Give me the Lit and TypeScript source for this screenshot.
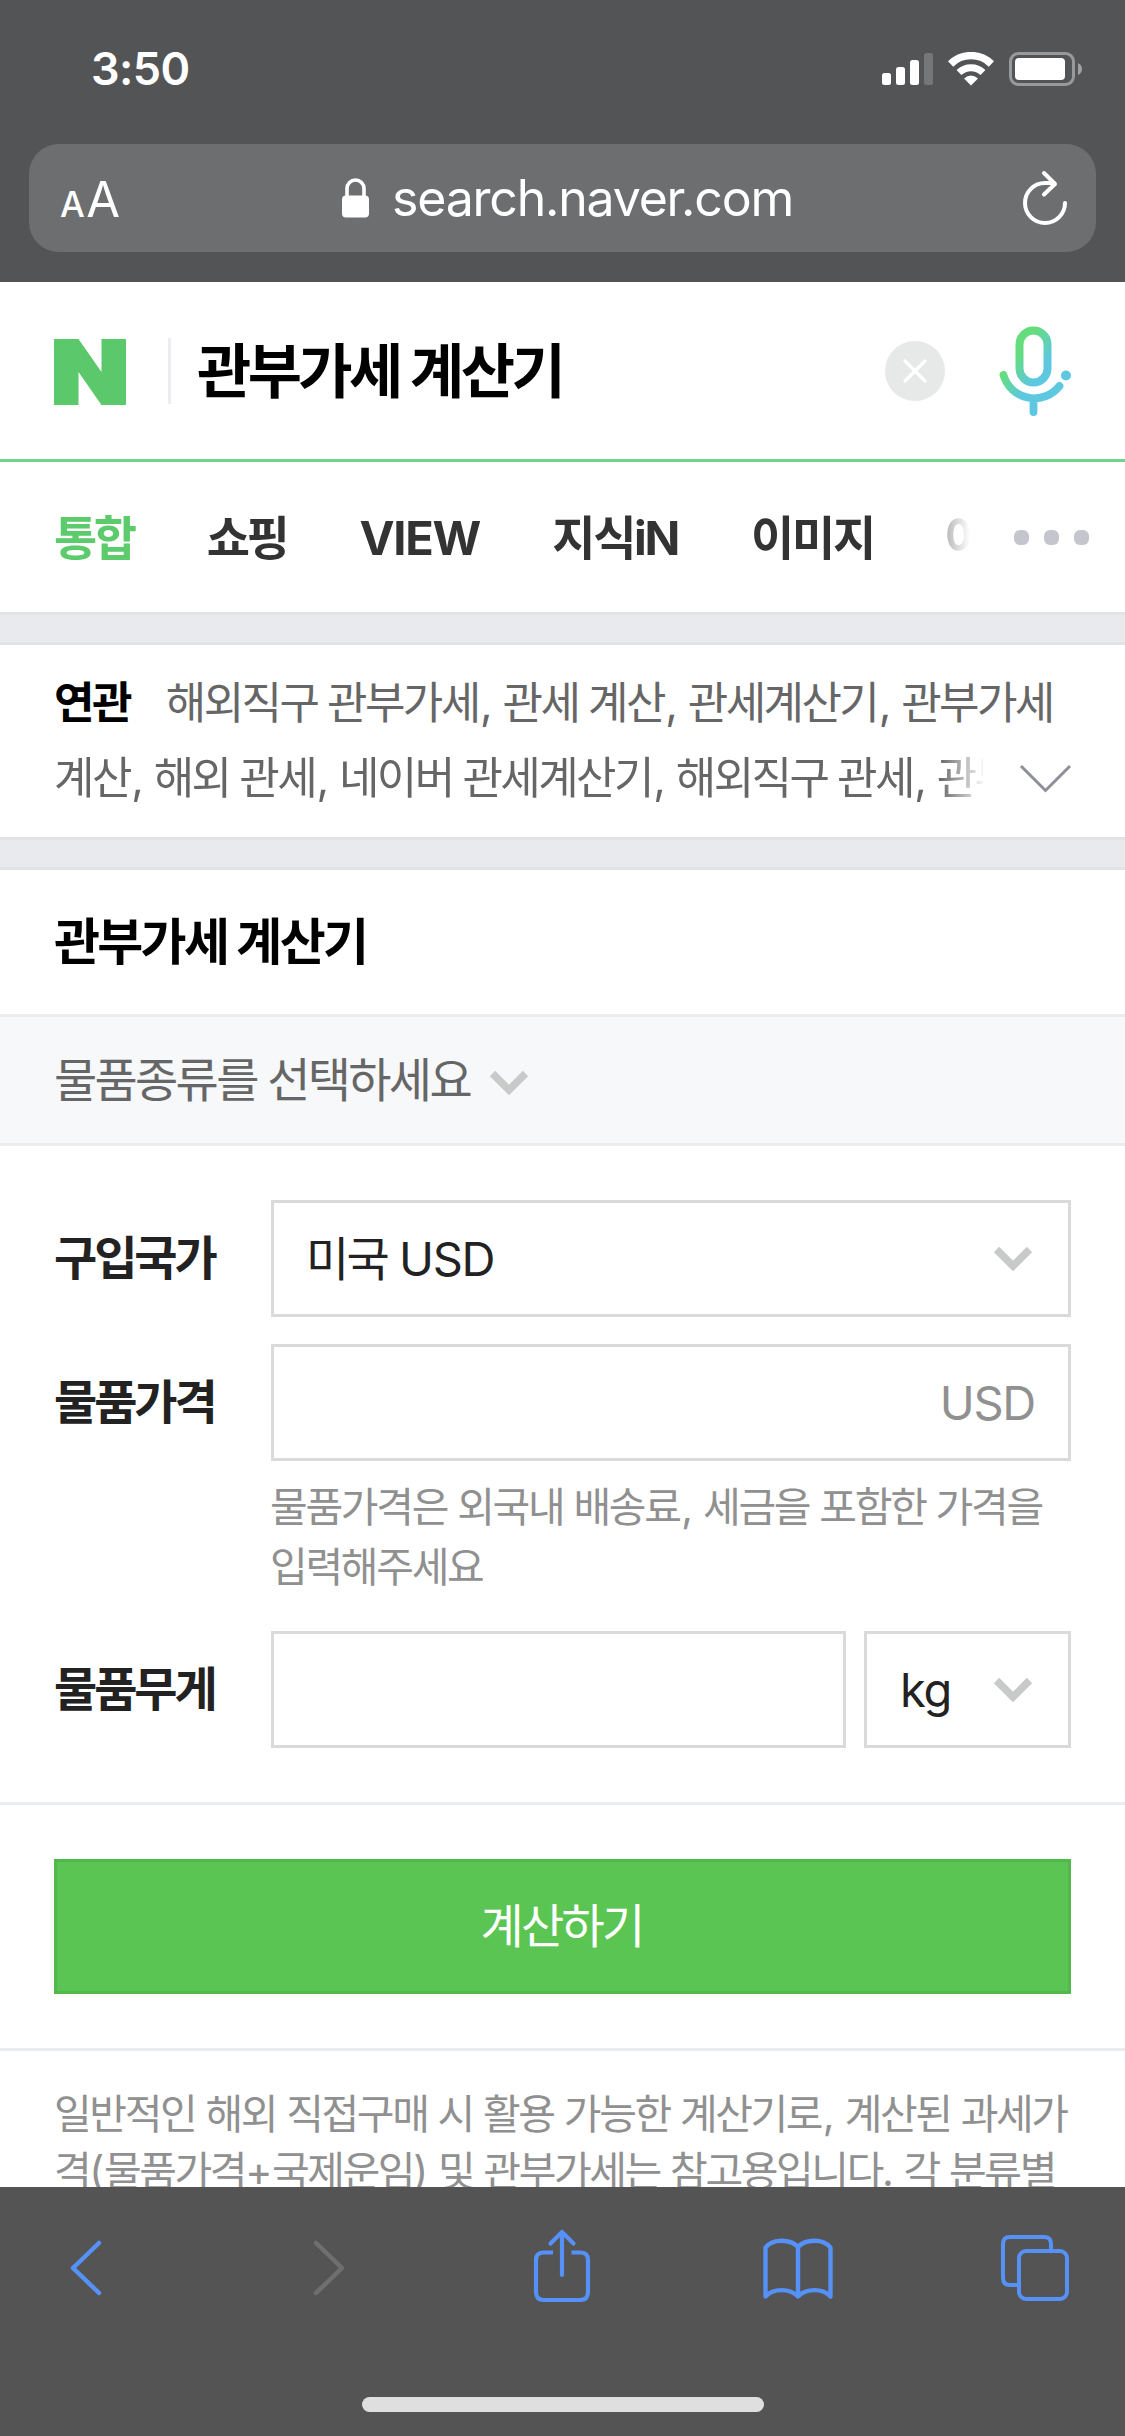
import { LitElement, html, css, svg } from "lit";
import { customElement } from "lit/decorators.js";

const chevron = html`<svg class="chev" width="40" height="26" viewBox="0 0 40 26">
  <path d="M3.5 3.5 L20 20 L36.5 3.5" fill="none" stroke="#c8cac9" stroke-width="7.5" />
</svg>`;

const bars = [[0, 20, 12], [14, 14, 18], [28, 7, 25]].map(
  ([x, y, h]) => svg`<rect x=${x} y=${y + 1} width="9" height=${h} rx="2.5" fill="#fff" />`
);

const spaced = (text: string) =>
  text.split(/([,()+.])/).map((part) => (/^[,()+.]$/.test(part)
    ? html`<span class=${part === "," ? "comma" : "punct"}>${part}</span>`
    : part));

@customElement("app-root")
export class AppRoot extends LitElement {
  static styles = css`
    :host { display: block; }
    * { box-sizing: border-box; }
    svg { display: block; flex: none; }
    .page {
      width: 1125px; height: 2436px; overflow: hidden; background: #fff;
      display: flex; flex-direction: column;
      font-family: Inter, "Noto Sans CJK KR", sans-serif;
      white-space: nowrap;
    }
    .comma { letter-spacing: -1px; margin: 0 1px 0 1.5px; }
    .punct { letter-spacing: -0.4px; }
    .top { height: 282px; flex: none; background: #535456; color: #fff; }
    .status { height: 144px; padding: 0 43px 6px 91px; display: flex; align-items: center; }
    .time { flex: 1; font-size: 45px; font-weight: 600; line-height: 60px; letter-spacing: -0.6px; }
    .sig { margin-right: 15px; }
    .wifi { margin-right: 15px; }
    .address {
      height: 108px; margin: 0 29px; padding: 0 28px 0 31px; border-radius: 30px;
      background: #6d6e70; display: flex; align-items: center;
    }
    .aa { width: 282px; padding-top: 7px; display: flex; align-items: baseline; gap: 3px; line-height: 60px; }
    .aa-s { font-size: 35px; font-weight: 500; letter-spacing: -1.5px; }
    .aa-l { font-size: 49px; letter-spacing: -1px; }
    .domain { flex: 1; margin-left: 23px; font-size: 50px; line-height: 60px; letter-spacing: -1.2px; }

    .search { height: 180px; flex: none; border-bottom: 3px solid #6fd58e; padding: 0 53px 0 54px; display: flex; align-items: center; }
    .logo { margin-top: 3px; }
    .divider { width: 3px; height: 66px; margin: 0 26px 0 42px; background: #ecedf2; }
    .query { flex: 1; margin-top: 2px; font-size: 59px; font-weight: 700; color: #000; letter-spacing: -3.6px; line-height: 80px; }
    .clear { margin-right: 54px; }

    .tabs { height: 150px; flex: none; padding: 0 36px 0 54px; display: flex; align-items: center; justify-content: space-between; }
    .tablist {
      width: 916px; overflow: hidden; display: flex; gap: 73px;
      -webkit-mask-image: linear-gradient(90deg, #000 850px, rgba(0, 0, 0, 0.35) 892px, transparent 916px);
      mask-image: linear-gradient(90deg, #000 850px, rgba(0, 0, 0, 0.35) 892px, transparent 916px);
    }
    .tab { flex: none; font-size: 47px; font-weight: 700; color: #333; letter-spacing: -3.4px; line-height: 75px; }
    .tab.on { color: #5ccb6c; }
    .tab.latin { letter-spacing: -1.2px; margin-right: -1px; }
    .tab.wide { letter-spacing: -2.3px; }
    .tab.last { margin-left: -2px; }

    .gap { height: 33px; flex: none; background: #e8eaee; border: solid #e1e3e6; border-width: 3px 0; }

    .related { height: 192px; flex: none; padding: 21px 53px 0 54px; font-size: 44px; line-height: 75px; color: #666; letter-spacing: -2.6px; }
    .rel-title { font-weight: 700; color: #000; margin-right: 36px; }
    .rel-row { display: flex; justify-content: space-between; align-items: center; }
    .rel-text {
      width: 929px; overflow: hidden;
      -webkit-mask-image: linear-gradient(90deg, #000 885px, transparent 932px);
      mask-image: linear-gradient(90deg, #000 885px, transparent 932px);
    }

    .title { height: 147px; flex: none; padding-left: 54px; border-bottom: 3px solid #ebecee; font-size: 50px; line-height: 144px; font-weight: 700; color: #000; letter-spacing: -2.7px; }
    .kind { height: 129px; flex: none; padding-left: 54px; border-bottom: 3px solid #ebecee; background: #f7f8fa; display: flex; align-items: center; font-size: 47px; line-height: 70px; color: #666; letter-spacing: -2.7px; gap: 19px; }
    .kind .chev { margin-top: 5px; }

    .form { height: 659px; flex: none; padding: 54px 54px 0; border-bottom: 3px solid #eaedf0; display: flex; flex-direction: column; }
    .row { display: flex; align-items: center; height: 117px; }
    .label { width: 217px; padding-bottom: 2px; font-size: 47px; font-weight: 700; color: #222; letter-spacing: -3.1px; line-height: 70px; }
    .box { height: 117px; border: 3px solid #d9dada; padding: 0 35px 0 32px; flex: 1; display: flex; align-items: center; justify-content: space-between; font-size: 47px; line-height: 70px; color: #222; letter-spacing: -1.3px; }
    .ko { letter-spacing: -2.7px; }
    .box.unit { color: #909090; justify-content: flex-end; padding-right: 33px; }
    .box.kg { flex: none; width: 207px; margin-left: 18px; padding-left: 33px; }
    .second { margin-top: 27px; }
    .help { margin: 16px 0 34px 216px; height: 120px; font-size: 41px; line-height: 60px; color: #909090; letter-spacing: -2.3px; word-spacing: 0.8px; }

    .action { height: 246px; flex: none; padding: 54px 54px 0; border-bottom: 3px solid #eaedf0; }
    .btn { height: 135px; padding-right: 2px; border: 3px solid #53b84c; background: #5ac553; color: #fff; font-size: 47px; line-height: 127px; text-align: center; letter-spacing: -2.7px; }
    .note { height: 136px; flex: none; overflow: hidden; padding: 35px 0 0 54px; font-size: 41px; line-height: 57px; color: #909090; letter-spacing: -2.4px; word-spacing: 1px; }

    .bottom { height: 249px; flex: none; background: #545454; display: flex; flex-direction: column; align-items: center; justify-content: space-between; padding: 41px 0 24px; }
    .tools { width: 1125px; height: 80px; padding-left: 68px; display: flex; align-items: center; }
    .fwd { margin-left: 211px; }
    .share { margin: -4px 0 0 186px; }
    .book { margin-left: 171px; }
    .windows { margin-left: 166px; }
    .home { width: 402px; height: 15px; border-radius: 8px; background: #dfdfdf; }
  `;

  render() {
    return html`<div class="page">
      <div class="top">
        <div class="status">
          <span class="time">3:50</span>
          <svg class="sig" width="51" height="34" viewBox="0 0 51 34">${bars}
            <rect x="42" y="1" width="9" height="32" rx="2.5" fill="#757678" /></svg>
          <svg class="wifi" width="46" height="34" viewBox="0 0 46 34" fill="none" stroke="#fff">
            <path d="M2.6 12 A29 29 0 0 1 43.4 12" stroke-width="7.5" />
            <path d="M11 20.5 A17.5 17.5 0 0 1 35 20.5" stroke-width="7" />
            <path d="M16 26.5 Q23 20.5 30 26.5 L23 33.5 Z" fill="#fff" stroke="none" />
          </svg>
          <svg width="73" height="34" viewBox="0 0 73 34">
            <rect x="1.5" y="1.5" width="63" height="31" rx="8" fill="none" stroke="#98999a" stroke-width="3" />
            <rect x="6" y="6" width="50" height="22" rx="4" fill="#fff" />
            <path d="M69 11 Q73 13 73 17 Q73 21 69 23 Z" fill="#a0a1a2" />
          </svg>
        </div>
        <div class="address">
          <div class="aa"><span class="aa-s">A</span><span class="aa-l">A</span></div>
          <svg width="27" height="40" viewBox="0 0 27 40">
            <path d="M5 19 V10.5 A8.5 8.5 0 0 1 22 10.5 V19" fill="none" stroke="#fff" stroke-width="3.6" />
            <rect y="17.5" width="27" height="22" rx="4" fill="#fff" />
          </svg>
          <span class="domain">search.naver.com</span>
          <svg width="46" height="56" viewBox="0 0 46 56" fill="none" stroke="#fff" stroke-width="4" stroke-linecap="round" stroke-linejoin="round">
            <path d="M43 33 A20 20 0 1 1 23 13 H32" /><path d="M22 3 L33 14 L22 24.5" />
          </svg>
        </div>
      </div>

      <div class="search">
        <svg class="logo" width="72" height="66" viewBox="0 0 72 66"><path fill="#5bc86c" d="M0 0H24.5L47.5 33V0H72V66H47.5L24.5 33V66H0Z" /></svg>
        <div class="divider"></div>
        <div class="query">관부가세 계산기</div>
        <svg class="clear" width="60" height="60" viewBox="0 0 60 60"><circle cx="30" cy="30" r="30" fill="#e6e9e8" />
          <path d="M20 20 L40 40 M40 20 L20 40" stroke="#fff" stroke-width="3.2" stroke-linecap="round" /></svg>
        <svg width="73" height="92" viewBox="0 0 73 92" fill="none" stroke="url(#mic)" stroke-linecap="round">
          <defs><linearGradient id="mic" gradientUnits="userSpaceOnUse" x1="12" y1="18" x2="50" y2="46">
            <stop offset="0.25" stop-color="#65dd7c" /><stop offset="0.85" stop-color="#5ec8e0" /></linearGradient></defs>
          <rect x="20.5" y="5.5" width="28" height="52" rx="14" stroke-width="8" />
          <path d="M4.5 50 A32 32 0 0 0 60.5 61 M34.5 74 V87" stroke-width="7.8" />
          <circle cx="67" cy="50.5" r="5" fill="#5ec8e0" stroke="none" />
        </svg>
      </div>

      <div class="tabs">
        <div class="tablist">
          <span class="tab on">통합</span><span class="tab">쇼핑</span><span class="tab latin">VIEW</span><span class="tab wide">지식iN</span><span class="tab wide">이미지</span><span class="tab last">어</span>
        </div>
        <svg width="75" height="15" viewBox="0 0 75 15" fill="#c5c6cd"><rect width="15" height="15" rx="6" /><rect x="30" width="15" height="15" rx="6" /><rect x="60" width="15" height="15" rx="6" /></svg>
      </div>

      <div class="gap"></div>
      <div class="related">
        <div><span class="rel-title">연관</span><span>${spaced("해외직구 관부가세, 관세 계산, 관세계산기, 관부가세")}</span></div>
        <div class="rel-row"><div class="rel-text">${spaced("계산, 해외 관세, 네이버 관세계산기, 해외직구 관세, 관부")}</div>
          <svg width="53" height="30" viewBox="0 0 53 30"><path d="M2 2 L26.5 26.5 L51 2" fill="none" stroke="#8d8e97" stroke-width="3" /></svg></div>
      </div>
      <div class="gap"></div>

      <div class="title">관부가세 계산기</div>
      <div class="kind"><span>물품종류를 선택하세요</span>${chevron}</div>

      <div class="form">
        <div class="row"><span class="label">구입국가</span><div class="box"><span><span class="ko">미국</span> USD</span>${chevron}</div></div>
        <div class="row second"><span class="label">물품가격</span><div class="box unit">USD</div></div>
        <div class="help">${spaced("물품가격은 외국내 배송료, 세금을 포함한 가격을")}<br />입력해주세요</div>
        <div class="row"><span class="label">물품무게</span><div class="box"></div><div class="box kg"><span>kg</span>${chevron}</div></div>
      </div>

      <div class="action"><div class="btn">계산하기</div></div>
      <div class="note">${spaced("일반적인 해외 직접구매 시 활용 가능한 계산기로, 계산된 과세가")}<br />${spaced("격(물품가격+국제운임) 및 관부가세는 참고용입니다. 각 분류별")}</div>

      <div class="bottom">
        <div class="tools">
          <svg width="34" height="56" viewBox="0 0 34 56" fill="none" stroke="#5691f8" stroke-width="4.5" stroke-linecap="round" stroke-linejoin="round"><path d="M31 3 L5 28 L31 53" /></svg>
          <svg class="fwd" width="34" height="56" viewBox="0 0 34 56" fill="none" stroke="#6f6f6f" stroke-width="4.5" stroke-linecap="round" stroke-linejoin="round"><path d="M3 3 L29 28 L3 53" /></svg>
          <svg class="share" width="58" height="76" viewBox="0 0 58 76" fill="none" stroke="#5691f8" stroke-width="4.2" stroke-linejoin="round">
            <path d="M20 24.5 H11 Q3 24.5 3 32 V64 Q3 72 11 72 H47 Q55 72 55 64 V32 Q55 24.5 47 24.5 H38.5" /><path stroke-linecap="round" d="M29 47 V4 M17.5 15.5 L29 4 L40.5 15.5" /></svg>
          <svg class="book" width="72" height="66" viewBox="0 0 72 66" fill="none" stroke="#5691f8" stroke-width="4.4" stroke-linejoin="round">
            <path d="M36 12 C29 4 11 3 3.5 12.5 V61.5 C11 53 28 53 36 61.5 C44 53 61 53 68.5 61.5 V12.5 C61 3 43 4 36 12 Z M36 12 V61" /></svg>
          <svg class="windows" width="70" height="70" viewBox="0 0 70 70" fill="none" stroke="#5691f8" stroke-width="4">
            <rect x="19" y="18" width="48" height="48" rx="7" /><path d="M17 52 H10 Q3 52 3 45 V11 Q3 4 10 4 H44 Q51 4 51 11 V18" /></svg>
        </div>
        <div class="home"></div>
      </div>
    </div>`;
  }
}
